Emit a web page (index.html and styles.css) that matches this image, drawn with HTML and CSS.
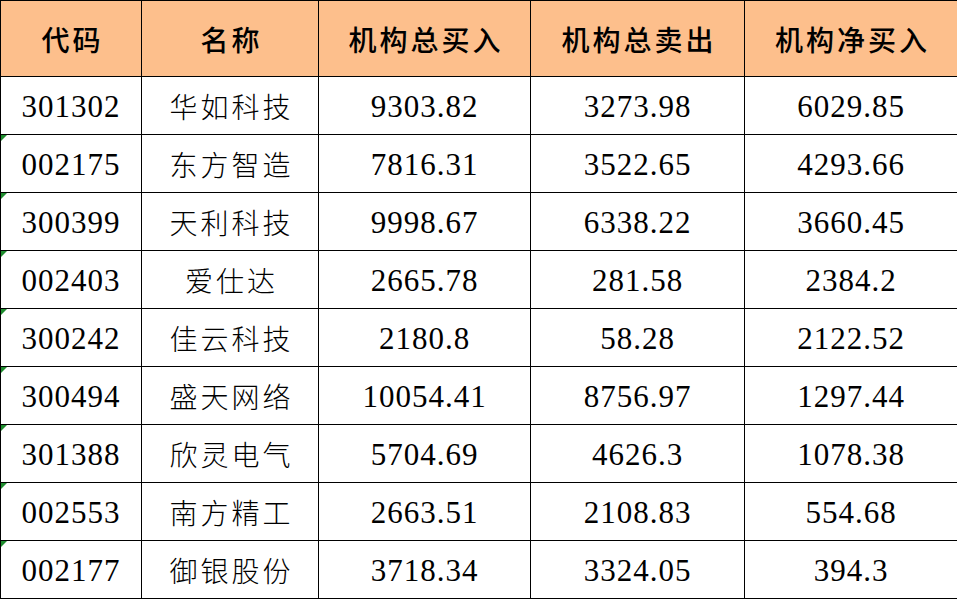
FILE: index.html
```html
<!DOCTYPE html>
<html lang="zh">
<head>
<meta charset="utf-8">
<link rel="stylesheet" href="styles.css">
</head>
<body>
<table class="grid">
  <colgroup>
    <col class="c1"><col class="c2"><col class="c3"><col class="c4"><col class="c5">
  </colgroup>
  <thead>
    <tr class="head"><th>代码</th><th>名称</th><th>机构总买入</th><th>机构总卖出</th><th>机构净买入</th></tr>
  </thead>
  <tbody>
    <tr><td class="code">301302</td><td class="name">华如科技</td><td>9303.82</td><td>3273.98</td><td>6029.85</td></tr>
    <tr><td class="code flag">002175</td><td class="name">东方智造</td><td>7816.31</td><td>3522.65</td><td>4293.66</td></tr>
    <tr><td class="code flag">300399</td><td class="name">天利科技</td><td>9998.67</td><td>6338.22</td><td>3660.45</td></tr>
    <tr><td class="code flag">002403</td><td class="name">爱仕达</td><td>2665.78</td><td>281.58</td><td>2384.2</td></tr>
    <tr><td class="code flag">300242</td><td class="name">佳云科技</td><td>2180.8</td><td>58.28</td><td>2122.52</td></tr>
    <tr><td class="code flag">300494</td><td class="name">盛天网络</td><td>10054.41</td><td>8756.97</td><td>1297.44</td></tr>
    <tr><td class="code flag">301388</td><td class="name">欣灵电气</td><td>5704.69</td><td>4626.3</td><td>1078.38</td></tr>
    <tr><td class="code flag">002553</td><td class="name">南方精工</td><td>2663.51</td><td>2108.83</td><td>554.68</td></tr>
    <tr><td class="code flag">002177</td><td class="name">御银股份</td><td>3718.34</td><td>3324.05</td><td>394.3</td></tr>
  </tbody>
</table>
</body>
</html>
```
FILE: styles.css
```css
html, body {
  margin: 0;
  padding: 0;
  background: #ffffff;
}
.grid {
  border-collapse: collapse;
  table-layout: fixed;
  width: 957px;
  font-family: "Liberation Serif", "Noto Sans CJK SC", serif;
  color: #000;
}
.c1 { width: 141px; }
.c2 { width: 177px; }
.c3 { width: 212px; }
.c4 { width: 214px; }
.c5 { width: 213px; }
.grid th, .grid td {
  border: 1px solid #000;
  text-align: center;
  vertical-align: middle;
  padding: 0;
  white-space: nowrap;
}
.head th {
  background: #fdbf8c;
  height: 75px;
  font-family: "Noto Sans CJK SC", sans-serif;
  font-size: 28px;
  font-weight: 500;
  letter-spacing: 3px;
  padding-left: 3px;
}
.grid td {
  height: 55px;
  font-size: 31px;
  letter-spacing: 1px;
  padding-top: 2px;
  line-height: 1;
}
.grid td.name {
  font-family: "Noto Sans CJK SC", sans-serif;
  font-size: 28px;
  font-weight: 300;
  letter-spacing: 3px;
  padding-left: 3px;
  padding-top: 0;
  height: 57px;
}
.code {
  position: relative;
}
.flag::before {
  content: "";
  position: absolute;
  left: 0;
  top: 0;
  width: 0;
  height: 0;
  border-top: 6px solid #1e8c2e;
  border-right: 6px solid transparent;
}
```
